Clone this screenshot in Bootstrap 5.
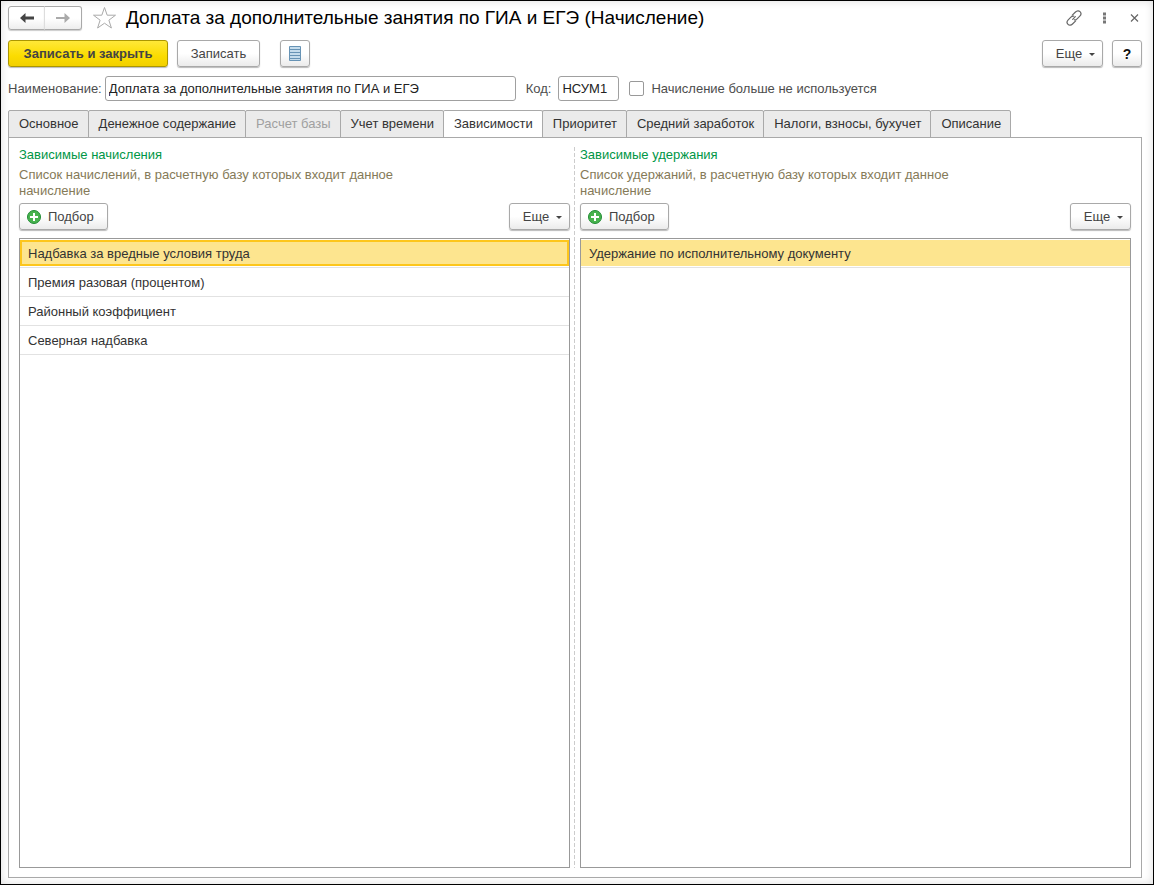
<!DOCTYPE html>
<html lang="ru">
<head>
<meta charset="utf-8">
<meta name="viewport" content="width=device-width, initial-scale=1">
<title>Доплата за дополнительные занятия по ГИА и ЕГЭ (Начисление)</title>
<link href="https://cdn.jsdelivr.net/npm/bootstrap@5.3.0/dist/css/bootstrap.min.css" rel="stylesheet">
<style>
body { font-family: "Liberation Sans", Arial, sans-serif; font-size: 13px; line-height: 16px; color: #333; background: #fff; padding-bottom: 1px; }
.app-window { border: 1px solid #000; box-shadow: inset 0 0 8px #ddd; padding: 5px 11px 6px 7px; }
.app-title { font-size: 19px; line-height: 24px; color: #000; }
.btn { --bs-btn-font-size: 13px; --bs-btn-line-height: 16px; --bs-btn-padding-x: 12px; --bs-btn-padding-y: 4px; --bs-btn-border-radius: 3px;
  --bs-btn-color: #444; --bs-btn-border-color: #a9a9a9; --bs-btn-hover-color: #222; --bs-btn-hover-border-color: #888; white-space: nowrap; }
.btn-face { height: 27px; background: linear-gradient(#fff 50%, #ebebeb); box-shadow: 0 1px 1px #bbb; }
.btn-save { width: 160px; background: linear-gradient(#ffe838, #fbdc00 60%, #f2d000); border-color: #ab9600; font-weight: 700; }
.btn-write { width: 83px; }
.btn-square { width: 30px; padding-left: 0; padding-right: 0; }
.btn-help { font-size: 14px; font-weight: 700; color: #111; }
.btn-more { width: 61px; padding-left: 10px; padding-right: 4px; }
.btn-more::after { border-width: 3px 3px 0; margin-left: 7px; vertical-align: 2px; }
.btn-pick { width: 89px; padding-left: 6px; padding-right: 6px; gap: 6px; }
.btn-nav { width: 37px; height: 24px; padding: 0; background: linear-gradient(#fff 50%, #eee); box-shadow: 0 1px 1px #ccc; }
.btn-nav + .btn-nav { width: 38px; border-left-color: #ddd; }
.btn-icon { padding: 0; border: 0; width: 16px; height: 16px; line-height: 0; }
.head-icons { gap: 14px; }
.form-control { font-size: 13px; line-height: 16px; height: 25px; padding: 3px; color: #222; border-color: #a0a0a0; border-radius: 3px; }
.name-field { width: 411px; }
.code-field { width: 61px; }
.form-label, .form-check-label { color: #4d4d4d; white-space: nowrap; }
.form-check-input { width: 15px; height: 15px; border-color: #999; }
.form-check-input[type=checkbox] { border-radius: 2px; }
.toolbar-row { gap: 9px; margin-top: 10px; }
.toolbar-row .btn-write { margin-right: 11px; }
.field-row { gap: 10px; margin: 9px 0; }
.field-pair { gap: 3px; }
.nav-tabs { --bs-nav-tabs-border-color: #a9a9a9; --bs-nav-tabs-border-radius: 2px; --bs-nav-tabs-link-active-border-color: #a9a9a9 #a9a9a9 #fff; border-bottom: 0; }
.nav-tabs .nav-link { height: 28px; padding: 5px 9px 5px 10px; font-size: 13px; line-height: 16px; color: #333; background: #ebebeb; border-color: #a9a9a9; white-space: nowrap; }
.nav-tabs .nav-item + .nav-item { margin-left: -1px; }
.nav-tabs .nav-link.active { color: #333; background: #fff; border-bottom-color: #fff; }
.nav-tabs .nav-link.disabled { color: #a0a0a0; background: #ebebeb; border-color: #a9a9a9; }
.tab-panel { border: 1px solid #a9a9a9; padding: 9px 10px; }
.dep-column { flex: 1 1 0; min-width: 0; }
.column-split { width: 10px; }
.column-split::before { content: ""; display: block; width: 1px; height: 100%; margin-left: 4px; background: repeating-linear-gradient(#ccc 0 4px, transparent 4px 6px); }
.group-title { font-size: 13px; line-height: 16px; color: #009646; }
.group-note { max-width: 400px; color: #857a58; margin-top: 4px; margin-bottom: 4px; }
.list-box { border: 1px solid #999; margin-top: 8px; }
.list-group { --bs-list-group-color: #333; --bs-list-group-border-color: #e2e2e2; --bs-list-group-item-padding-x: 8px; --bs-list-group-item-padding-y: 6px; --bs-list-group-active-bg: #fde58f; --bs-list-group-active-color: #333; --bs-list-group-active-border-color: #e2e2e2; }
.list-group-flush > .list-group-item { height: 29px; padding-top: 7px; padding-bottom: 5px; border-width: 0 0 1px; }
.list-group-flush > .list-group-item:last-child { border-bottom-width: 1px; }
.list-group-flush > .list-group-item.active { margin-top: 0; background-clip: padding-box; box-shadow: inset 0 1px #fff, inset 0 -1px #fff; }
.list-group-flush > .list-group-item.current { box-shadow: inset 0 1px #fff, inset 0 -1px #fff, inset 0 3px #fdc61c, inset 0 -3px #fdc61c, inset 2px 0 #fdc61c, inset -2px 0 #fdc61c; }
</style>
</head>
<body class="min-vh-100 d-flex flex-column">
<main class="app-window flex-grow-1 d-flex flex-column">
  <header class="d-flex align-items-center">
    <div class="btn-group" role="group" aria-label="Навигация">
      <button type="button" class="btn btn-nav d-flex align-items-center justify-content-center" aria-label="Назад"><svg width="16" height="12" viewBox="0 0 16 12"><path d="M1 6l5.500-5v3.600H15v2.800H6.500V11z" fill="#444"/></svg></button>
      <button type="button" class="btn btn-nav d-flex align-items-center justify-content-center" aria-label="Вперед"><svg width="16" height="12" viewBox="0 0 16 12"><path d="M15 6l-5.500-5v3.900H1v2.200h8.500V11z" fill="#aaa"/></svg></button>
    </div>
    <button type="button" class="btn btn-icon w-auto h-auto ms-2 me-2" aria-label="В избранное"><svg width="28" height="24" viewBox="0 0 28 24"><path d="M14.500 1.500l2.700 7.700h8.300l-6.600 5 2.500 7.800-6.900-4.800L7.600 22l2.500-7.800-6.600-5h8.300z" fill="#fff" stroke="#aaa"/></svg></button>
    <h1 class="app-title fw-normal mb-0">Доплата за дополнительные занятия по ГИА и ЕГЭ (Начисление)</h1>
    <div class="head-icons d-flex ms-auto">
      <button type="button" class="btn btn-icon" aria-label="Ссылка"><svg width="16" height="16" viewBox="0 0 16 16"><g fill="none" stroke="#666" stroke-width="1.200" stroke-linecap="round"><path d="M6.300 5.200l3.200-3.200c1.500-1.500 3.300-1.600 4.500-.4s1.200 3.100-.2 4.500l-2.700 2.700c-.9.9-1.900 1.200-2.800 1"/><path d="M9.700 10.800l-3.200 3.200c-1.500 1.500-3.300 1.600-4.500.4s-1.200-3.100.2-4.500l2.700-2.700c.9-.9 1.900-1.200 2.800-1M6.700 9.300l2.600-2.600"/></g></svg></button>
      <button type="button" class="btn btn-icon" aria-label="Меню"><svg width="16" height="16" viewBox="0 0 16 16"><path d="M7 2.500h3v3H7zM7 6.500h3v3H7zM7 10.500h3v3H7z" fill="#777"/></svg></button>
      <button type="button" class="btn btn-icon" aria-label="Закрыть"><svg width="16" height="16" viewBox="0 0 16 16"><path d="M5 4.500l7 7m0-7l-7 7" stroke="#666" stroke-width="1.200"/></svg></button>
    </div>
  </header>

  <div class="d-flex toolbar-row">
    <button type="button" class="btn btn-face btn-save">Записать и закрыть</button>
    <button type="button" class="btn btn-face btn-write">Записать</button>
    <button type="button" class="btn btn-face btn-square d-flex align-items-center justify-content-center" aria-label="Список"><svg width="12" height="15" viewBox="0 0 12 15"><path d="M.5.5h11v14H.5z" fill="#c5dcec" stroke="#6793b5"/><path d="M1 3.500h10M1 6.500h10M1 9.500h10M1 12.500h10" stroke="#6793b5"/></svg></button>
    <button type="button" class="btn btn-face btn-more dropdown-toggle ms-auto">Еще</button>
    <button type="button" class="btn btn-face btn-square btn-help">?</button>
  </div>

  <form class="d-flex align-items-center field-row">
    <div class="field-pair d-flex align-items-center">
      <label class="form-label mb-0" for="name">Наименование:</label>
      <input class="form-control name-field" id="name" value="Доплата за дополнительные занятия по ГИА и ЕГЭ">
    </div>
    <div class="field-pair d-flex align-items-center">
      <label class="form-label mb-0 me-1" for="code">Код:</label>
      <input class="form-control code-field" id="code" value="НСУМ1">
    </div>
    <div class="field-pair d-flex align-items-center">
      <input class="form-check-input mt-0" type="checkbox" id="unused">
      <label class="form-check-label ms-1" for="unused">Начисление больше не используется</label>
    </div>
  </form>

  <ul class="nav nav-tabs" role="tablist">
    <li class="nav-item"><button type="button" class="nav-link" role="tab">Основное</button></li>
    <li class="nav-item"><button type="button" class="nav-link" role="tab">Денежное содержание</button></li>
    <li class="nav-item"><button type="button" class="nav-link disabled" role="tab" disabled>Расчет базы</button></li>
    <li class="nav-item"><button type="button" class="nav-link" role="tab">Учет времени</button></li>
    <li class="nav-item"><button type="button" class="nav-link active" role="tab" aria-selected="true">Зависимости</button></li>
    <li class="nav-item"><button type="button" class="nav-link" role="tab">Приоритет</button></li>
    <li class="nav-item"><button type="button" class="nav-link" role="tab">Средний заработок</button></li>
    <li class="nav-item"><button type="button" class="nav-link" role="tab">Налоги, взносы, бухучет</button></li>
    <li class="nav-item"><button type="button" class="nav-link" role="tab">Описание</button></li>
  </ul>

  <div class="tab-panel flex-grow-1 d-flex" role="tabpanel">
    <section class="dep-column d-flex flex-column">
      <h2 class="group-title fw-normal mb-0">Зависимые начисления</h2>
      <p class="group-note">Список начислений, в расчетную базу которых входит данное начисление</p>
      <div class="d-flex justify-content-between">
        <button type="button" class="btn btn-face btn-pick d-flex align-items-center"><svg width="16" height="16" viewBox="0 0 16 16"><circle cx="8" cy="8" r="6.500" fill="#48b34e" stroke="#218c35"/><path d="M8 4v8M4 8h8" stroke="#fff" stroke-width="2"/></svg>Подбор</button>
        <button type="button" class="btn btn-face btn-more dropdown-toggle">Еще</button>
      </div>
      <div class="list-box flex-grow-1">
        <ul class="list-group list-group-flush rounded-0">
          <li class="list-group-item active current">Надбавка за вредные условия труда</li>
          <li class="list-group-item">Премия разовая (процентом)</li>
          <li class="list-group-item">Районный коэффициент</li>
          <li class="list-group-item">Северная надбавка</li>
        </ul>
      </div>
    </section>
    <div class="column-split flex-shrink-0"></div>
    <section class="dep-column d-flex flex-column">
      <h2 class="group-title fw-normal mb-0">Зависимые удержания</h2>
      <p class="group-note">Список удержаний, в расчетную базу которых входит данное начисление</p>
      <div class="d-flex justify-content-between">
        <button type="button" class="btn btn-face btn-pick d-flex align-items-center"><svg width="16" height="16" viewBox="0 0 16 16"><circle cx="8" cy="8" r="6.500" fill="#48b34e" stroke="#218c35"/><path d="M8 4v8M4 8h8" stroke="#fff" stroke-width="2"/></svg>Подбор</button>
        <button type="button" class="btn btn-face btn-more dropdown-toggle">Еще</button>
      </div>
      <div class="list-box flex-grow-1">
        <ul class="list-group list-group-flush rounded-0">
          <li class="list-group-item active">Удержание по исполнительному документу</li>
        </ul>
      </div>
    </section>
  </div>
</main>
<script src="https://cdn.jsdelivr.net/npm/bootstrap@5.3.0/dist/js/bootstrap.bundle.min.js"></script>
</body>
</html>
